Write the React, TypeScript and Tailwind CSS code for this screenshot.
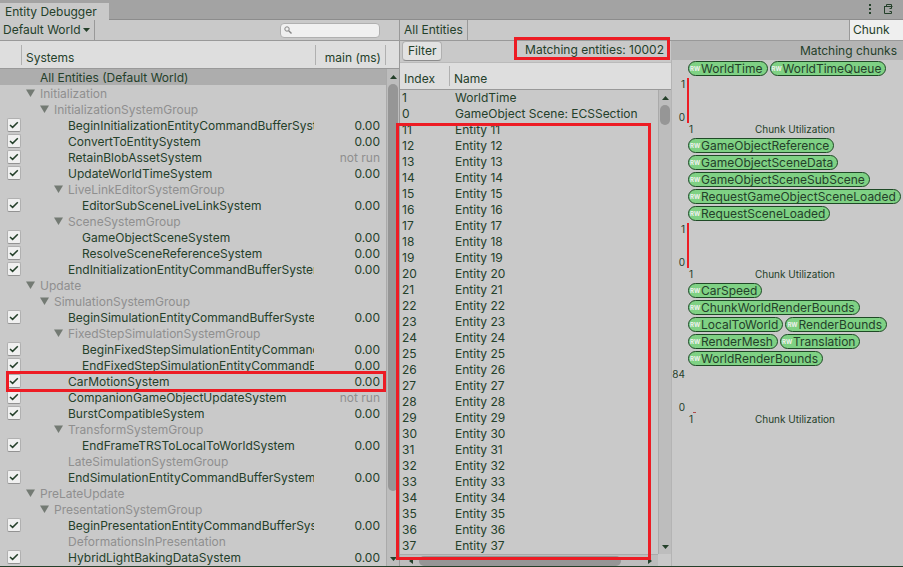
import React from "react";

type SystemRow = {
  name: string;
  depth: number;
  group?: boolean;
  leaf?: boolean;
  time?: string;
  highlight?: boolean;
};

const systems: SystemRow[] = [
  { name: "Initialization", depth: 0, group: true },
  { name: "InitializationSystemGroup", depth: 1, group: true },
  { name: "BeginInitializationEntityCommandBufferSystem", depth: 2, time: "0.00" },
  { name: "ConvertToEntitySystem", depth: 2, time: "0.00" },
  { name: "RetainBlobAssetSystem", depth: 2, time: "not run" },
  { name: "UpdateWorldTimeSystem", depth: 2, time: "0.00" },
  { name: "LiveLinkEditorSystemGroup", depth: 2, group: true },
  { name: "EditorSubSceneLiveLinkSystem", depth: 3, time: "0.00" },
  { name: "SceneSystemGroup", depth: 2, group: true },
  { name: "GameObjectSceneSystem", depth: 3, time: "0.00" },
  { name: "ResolveSceneReferenceSystem", depth: 3, time: "0.00" },
  { name: "EndInitializationEntityCommandBufferSystem", depth: 2, time: "0.00" },
  { name: "Update", depth: 0, group: true },
  { name: "SimulationSystemGroup", depth: 1, group: true },
  { name: "BeginSimulationEntityCommandBufferSystem", depth: 2, time: "0.00" },
  { name: "FixedStepSimulationSystemGroup", depth: 2, group: true },
  { name: "BeginFixedStepSimulationEntityCommandBufferSystem", depth: 3, time: "0.00" },
  { name: "EndFixedStepSimulationEntityCommandBufferSystem", depth: 3, time: "0.00" },
  { name: "CarMotionSystem", depth: 2, time: "0.00", highlight: true },
  { name: "CompanionGameObjectUpdateSystem", depth: 2, time: "not run" },
  { name: "BurstCompatibleSystem", depth: 2, time: "0.00" },
  { name: "TransformSystemGroup", depth: 2, group: true },
  { name: "EndFrameTRSToLocalToWorldSystem", depth: 3, time: "0.00" },
  { name: "LateSimulationSystemGroup", depth: 2, group: true, leaf: true },
  { name: "EndSimulationEntityCommandBufferSystem", depth: 2, time: "0.00" },
  { name: "PreLateUpdate", depth: 0, group: true },
  { name: "PresentationSystemGroup", depth: 1, group: true },
  { name: "BeginPresentationEntityCommandBufferSystem", depth: 2, time: "0.00" },
  { name: "DeformationsInPresentation", depth: 2, group: true, leaf: true },
  { name: "HybridLightBakingDataSystem", depth: 2, time: "0.00" },
];

const indents = ["pl-1", "pl-[18px]", "pl-8", "pl-[46px]"];

const entities = [
  { index: 1, name: "WorldTime" },
  { index: 0, name: "GameObject Scene: ECSSection" },
  ...Array.from({ length: 27 }, (_, i) => ({ index: i + 11, name: `Entity ${i + 11}` })),
];

const chunks = [
  { rows: [["WorldTime", "WorldTimeQueue"]], max: "1", full: true },
  {
    rows: [
      ["GameObjectReference"],
      ["GameObjectSceneData"],
      ["GameObjectSceneSubScene"],
      ["RequestGameObjectSceneLoaded"],
      ["RequestSceneLoaded"],
    ],
    max: "1",
    full: true,
  },
  {
    rows: [
      ["CarSpeed"],
      ["ChunkWorldRenderBounds"],
      ["LocalToWorld", "RenderBounds"],
      ["RenderMesh", "Translation"],
      ["WorldRenderBounds"],
    ],
    max: "84",
    full: false,
  },
];

function Arrow({ dir, className = "" }: { dir: "up" | "down" | "left" | "right"; className?: string }) {
  const points = {
    up: "0,5 7,5 3.5,1",
    down: "0,1 7,1 3.5,5",
    left: "5,0 5,6 1,3",
    right: "1,0 1,6 5,3",
  }[dir];
  return (
    <svg viewBox="0 0 7 6" className={`h-1.5 w-[7px] shrink-0 ${className}`} aria-hidden="true">
      <polygon points={points} fill="currentColor" />
    </svg>
  );
}

function Foldout() {
  return (
    <svg viewBox="0 0 9 8" className="h-2 w-[9px]" aria-hidden="true">
      <polygon points="0,0.5 9,0.5 4.5,8" fill="#737a73" />
    </svg>
  );
}

function CheckBox({ id }: { id: string }) {
  return (
    <span className="relative mt-px ml-[7px] block h-[14px] w-[14px] shrink-0">
      <input
        id={id}
        type="checkbox"
        defaultChecked
        className="peer block h-[14px] w-[14px] appearance-none rounded-xs border border-[#b0b0b0] border-b-[#929292] bg-[#f0f0f0]"
      />
      <svg
        viewBox="0 0 14 14"
        className="pointer-events-none absolute inset-0 hidden h-[14px] w-[14px] peer-checked:block"
        aria-hidden="true"
      >
        <path d="M3 7 L5.6 9.4 L10.8 4.2" fill="none" stroke="#24402a" strokeWidth="1.5" />
      </svg>
    </span>
  );
}

function VerticalScroll({ children }: { children: React.ReactNode }) {
  return (
    <div className="flex min-h-0 flex-1 flex-col items-center border-l border-[#aaaaaa] bg-[#bdbdbd] pt-[5px] pb-1">
      <Arrow dir="up" />
      <div className="mt-1 mb-1 flex min-h-0 w-full flex-1 flex-col items-center">{children}</div>
      <Arrow dir="down" />
    </div>
  );
}

function SystemsPanel() {
  return (
    <section className="flex min-h-0 border-r border-[#999999]">
      <div className="min-w-0 flex-1 overflow-y-clip">
        <table className="block w-full text-left leading-[18px]">
          <thead className="block">
            <tr className="flex h-7 items-end border-b border-[#999999] bg-[#dedede] pb-[3px]">
              <th className="h-5 w-[22px] shrink-0 border-r border-[#b0b0b0]" aria-label="Enabled" />
              <th className="h-5 min-w-0 flex-1 border-r border-[#b0b0b0] pt-1 pl-1 font-normal">Systems</th>
              <th className="h-5 w-[70px] shrink-0 border-r border-[#b0b0b0] pt-1 pr-1 text-right font-normal">
                main (ms)
              </th>
            </tr>
          </thead>
          <tbody className="block">
            <tr className="flex h-4 bg-[#adadad]">
              <td className="pl-10">All Entities (Default World)</td>
            </tr>
            {systems.map((s, i) => (
              <tr key={i} className="relative flex h-4">
                <td className="w-[22px] shrink-0">{!s.group && <CheckBox id={`system-${i}`} />}</td>
                <td className={`flex min-w-0 flex-1 overflow-x-clip whitespace-nowrap ${indents[s.depth]}`}>
                  <span className="flex w-3.5 shrink-0 items-center">{s.group && !s.leaf && <Foldout />}</span>
                  {s.group ? (
                    <span className="text-[#8f8f8f]">{s.name}</span>
                  ) : (
                    <label htmlFor={`system-${i}`}>{s.name}</label>
                  )}
                </td>
                <td
                  className={`w-[72px] shrink-0 pr-1.5 text-right ${s.time === "not run" ? "text-[#8f8f8f]" : ""}`}
                >
                  {s.time}
                </td>
                {s.highlight && (
                  <td
                    aria-hidden="true"
                    className="pointer-events-none absolute -top-0.5 right-0 -bottom-[3px] left-1.5 z-10 border-[3px] border-[#ed1c24]"
                  />
                )}
              </tr>
            ))}
          </tbody>
        </table>
      </div>
      <div className="flex w-[13px] shrink-0 flex-col">
        <div className="h-7 border-b border-[#999999] bg-[#dedede]" />
        <VerticalScroll>
          <div className="h-[87%] w-2.5 rounded-full bg-[#969696]" />
        </VerticalScroll>
      </div>
    </section>
  );
}

function EntitiesPanel() {
  return (
    <section className="relative flex min-h-0 flex-col">
      <div className="flex h-[21px] items-start pl-0.5">
        <button
          type="button"
          className="h-5 rounded-sm border border-[#b0b0b0] border-b-[#8c8c8c] bg-[#e2e2e2] px-[5px]"
        >
          Filter
        </button>
        <span className="relative ml-auto pt-px pr-[7px]">
          Matching entities: 10002
          <span
            aria-hidden="true"
            className="pointer-events-none absolute -top-1 right-px h-[23px] w-[156px] border-[3px] border-[#ed1c24]"
          />
        </span>
      </div>
      <div className="flex min-h-0 flex-1">
        <div className="flex min-w-0 flex-1 flex-col">
          <table className="block min-h-0 w-full flex-1 overflow-hidden text-left">
            <thead className="block leading-[18px]">
              <tr className="flex h-7 items-end border-t border-b border-t-[#bababa] border-b-[#999999] bg-[#dedede] pb-[3px]">
                <th className="h-5 w-[50px] border-r border-[#b0b0b0] pt-1 pl-1 font-normal">Index</th>
                <th className="h-5 pt-1 pl-1 font-normal">Name</th>
              </tr>
            </thead>
            <tbody className="block">
              {entities.map((e) => (
                <tr key={e.index} className="flex h-4">
                  <td className="w-[55px] pl-0.5">{e.index}</td>
                  <td className="whitespace-nowrap">{e.name}</td>
                </tr>
              ))}
            </tbody>
          </table>
          <div className="flex h-3 shrink-0 items-center border-t border-[#aaaaaa] bg-[#bdbdbd] pr-1 pl-2">
            <Arrow dir="left" />
            <div className="mx-1 flex-1">
              <div className="h-2.5 w-[90%] rounded-full bg-[#969696]" />
            </div>
            <Arrow dir="right" />
          </div>
        </div>
        <div className="flex w-[13px] shrink-0 flex-col pb-3">
          <div className="h-7 border-t border-b border-t-[#bababa] border-b-[#999999] bg-[#dedede]" />
          <VerticalScroll>
            <div className="h-5 w-2.5 rounded-full bg-[#969696]" />
          </VerticalScroll>
        </div>
      </div>
      <div
        aria-hidden="true"
        className="pointer-events-none absolute top-[82px] right-5 bottom-1.5 -left-1 border-[3px] border-[#ed1c24]"
      />
    </section>
  );
}

function Chip({ name }: { name: string }) {
  return (
    <span className="flex h-[15px] shrink-0 items-center rounded-full border border-[#1f4a26] bg-[#7fd184] pr-1 pl-px leading-3 whitespace-nowrap">
      <span className="w-[11px] shrink-0 text-[6px] font-bold text-[#f0f0f0]">RW</span>
      {name}
    </span>
  );
}

function ChunksPanel() {
  return (
    <section className="min-h-0 min-w-0 overflow-hidden border-l border-[#b4b4b4]">
      <h2 className="h-[19px] bg-[#b4b4b4] pt-0.5 pr-1.5 text-right">Matching chunks</h2>
      <div className="pt-px">
        {chunks.map((c, i) => (
          <div key={i}>
            <div className="pl-4">
              {c.rows.map((row, r) => (
                <div key={r} className="flex h-[17px] gap-0.5">
                  {row.map((n) => (
                    <Chip key={n} name={n} />
                  ))}
                </div>
              ))}
            </div>
            <div className="h-[60px] text-[10px] leading-3">
              <div className="flex h-[45px]">
                <div className="flex w-[15px] flex-col items-end justify-between pr-0.5">
                  <span>{c.max}</span>
                  <span>0</span>
                </div>
                {c.full ? (
                  <div className="w-0.5 bg-[#ed1c24]" />
                ) : (
                  <div className="ml-1.5 h-px w-[3px] self-end bg-[#b04a4a]" />
                )}
              </div>
              <div className="flex pr-16 pl-[17px]">
                <span>1</span>
                <span className="ml-auto pr-1">Chunk Utilization</span>
              </div>
            </div>
          </div>
        ))}
      </div>
    </section>
  );
}

export default function App() {
  return (
    <main className="flex h-screen flex-col overflow-hidden border-b border-[#24402a] bg-[#c9c9c9] font-['Inter',sans-serif] text-[12px] leading-4 text-[#24402a]">
      <header className="flex h-5 shrink-0 items-end justify-between bg-[#a3a3a3]">
        <div className="flex h-full flex-1 items-end">
          <h1 className="h-[17px] bg-[#c9c9c9] pr-3 pl-[5px] leading-[18px]">Entity Debugger</h1>
          <div className="h-full flex-1 border-b border-[#8c8c8c]" />
        </div>
        <div className="flex h-full items-start gap-3 border-b border-[#8c8c8c] pt-[3px] pr-2.5">
          <button type="button" aria-label="More options" className="h-3 w-1">
            <svg viewBox="0 0 4 12" className="h-3 w-1" fill="#24402a">
              <rect x="1" y="1" width="2" height="2" />
              <rect x="1" y="5" width="2" height="2" />
              <rect x="1" y="9" width="2" height="2" />
            </svg>
          </button>
          <button type="button" aria-label="Lock" className="h-3 w-[9px]">
            <svg viewBox="0 0 9 12" className="h-3 w-[9px]" fill="none" stroke="#24402a">
              <path d="M0.5 3 V10.5 H7.5 V8.5 H5.5 M0.5 3.5 H8.5 M7.5 3.5 V5.5 H5.5 M2.5 3 V1.5 H7.5 V3" />
            </svg>
          </button>
        </div>
      </header>

      <div className="grid h-[21px] shrink-0 grid-cols-[minmax(0,400fr)_minmax(0,503fr)] border-b border-[#999999]">
        <div className="flex border-r border-[#999999]">
          <div className="flex items-center border-r border-[#999999] pr-1">
            <select aria-label="World" className="h-5 appearance-none bg-transparent pr-0 pl-[3px] leading-5">
              <option>Default World</option>
            </select>
            <Arrow dir="down" className="ml-0.5" />
          </div>
          <div className="relative ml-auto flex items-center pr-[19px]">
            <svg
              viewBox="0 0 8 8"
              className="absolute left-1 h-2 w-2"
              fill="none"
              stroke="#858585"
              aria-hidden="true"
            >
              <circle cx="3" cy="3" r="2.2" />
              <path d="M4.7 4.7 L7.5 7.5" strokeWidth="1.4" />
            </svg>
            <input
              type="search"
              aria-label="Search systems"
              className="h-[15px] w-[100px] rounded-sm border border-[#b0b0b0] bg-[#f0f0f0] pl-3.5"
            />
          </div>
        </div>
        <div className="flex leading-[18px]">
          <button type="button" className="border-r border-[#999999] px-1">
            All Entities
          </button>
          <button
            type="button"
            className="ml-auto w-[54px] border-l border-[#999999] bg-[#efefef] pl-[3px] text-left"
          >
            Chunk
          </button>
        </div>
      </div>

      <div className="grid min-h-0 flex-1 grid-cols-[minmax(0,400fr)_minmax(0,271fr)_minmax(0,232fr)]">
        <SystemsPanel />
        <EntitiesPanel />
        <ChunksPanel />
      </div>
    </main>
  );
}
